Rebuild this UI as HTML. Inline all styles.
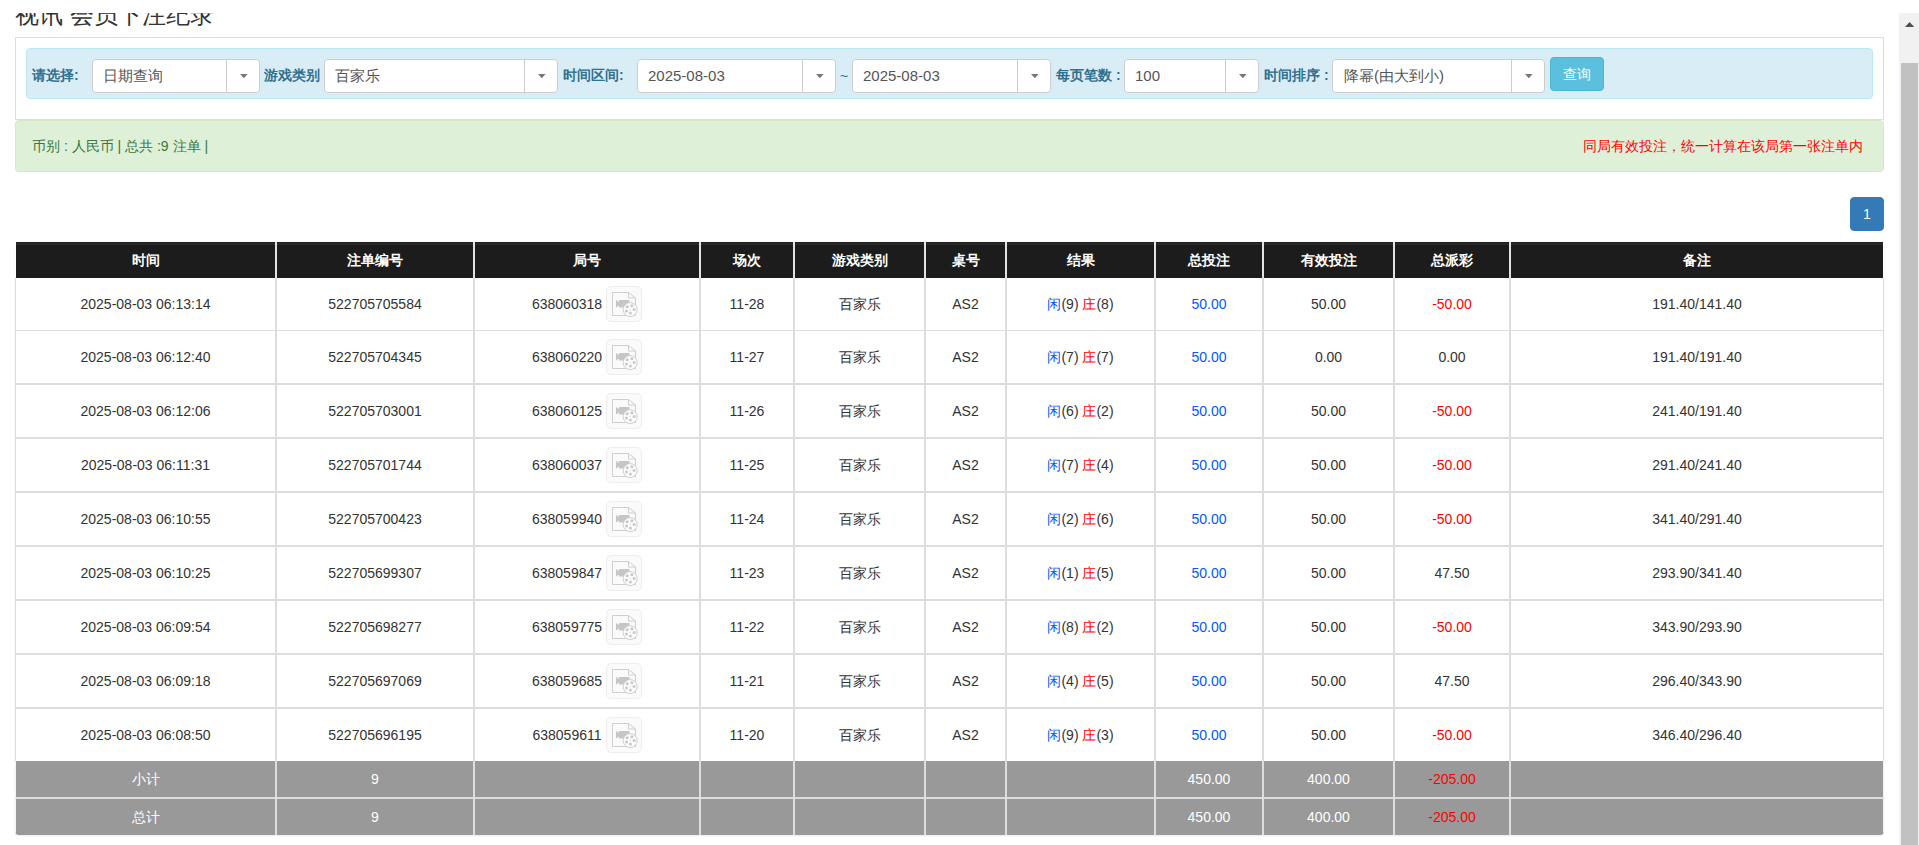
<!DOCTYPE html>
<html><head><meta charset="utf-8">
<style>
*{box-sizing:border-box;margin:0;padding:0}
html,body{width:1919px;height:845px;overflow:hidden;background:#fff;font-family:"Liberation Sans",sans-serif;color:#333;font-size:14px}
.abs{position:absolute}
.title{position:absolute;left:15px;top:0px;font-size:24px;line-height:30px;color:#333;white-space:nowrap}
.cover{position:absolute;left:0;top:0;width:1899px;height:13px;background:#fff}
.sb{position:absolute;left:1899px;top:13px;width:20px;height:832px;background:#f1f1f1}
.sbarr{position:absolute;left:6px;top:9px}
.thumb{position:absolute;left:2px;top:50px;width:17px;height:800px;background:#c1c1c1}
.panel{position:absolute;left:15px;top:37px;width:1869px;height:83px;border:1px solid #ddd;border-bottom:1px solid #ddd}
.well{position:absolute;left:26px;top:48px;width:1847px;height:51px;background:#d9edf7;border:1px solid #bce8f1;border-radius:4px}
.lbl{position:absolute;top:65px;font-size:14px;line-height:20px;font-weight:bold;color:#31708f;white-space:nowrap}
.sel{position:absolute;top:59px;height:34px;background:#fff;border:1px solid #ccc;border-radius:4px}
.selt{position:absolute;top:6px;font-size:15px;line-height:20px;color:#555;white-space:nowrap}
.dv{position:absolute;top:0;width:1px;height:32px;background:#ccc}
.arr{position:absolute;top:14px}
.tilde{position:absolute;left:840px;top:66px;font-size:14px;line-height:20px;color:#31708f}
.btn{position:absolute;left:1550px;top:57px;width:54px;height:34px;background:#5bc0de;border:1px solid #46b8da;border-radius:4px;color:#fff;font-size:14px;line-height:20px;text-align:center;padding-top:6px}
.alert{position:absolute;left:15px;top:120px;width:1869px;height:52px;background:#dff0d8;border:1px solid #d6e9c6;border-radius:4px;color:#3c763d;font-size:14px;line-height:20px}
.al{position:absolute;left:16px;top:15px;white-space:nowrap}
.ar{position:absolute;right:20px;top:15px;color:#f00;white-space:nowrap}
.pg{position:absolute;left:1850px;top:197px;width:34px;height:34px;background:#337ab7;border:1px solid #337ab7;border-radius:4px;color:#fff;font-size:14px;line-height:20px;text-align:center;padding-top:6px}
.tbl{position:absolute;left:15px;top:242px;width:1869px}
.hrow,.row,.srow{display:flex}
.c{flex:none;line-height:20px;display:flex;align-items:center;justify-content:center;white-space:nowrap;border-left:1px solid #ddd;border-right:1px solid #ddd}
.hrow .c{height:36px;background:linear-gradient(#1c1c1c 0,#1c1c1c 1px,#282828 1px,#282828 3px,#1c1c1c 3px);color:#fff;font-weight:bold;border-color:#e3e3e3}
.row .c{height:54px;background:#fff;border-top:1px solid #ddd;border-bottom:1px solid #ddd}
.row.r1 .c{height:53px;border-top:0}
.row.last .c{height:53px;border-bottom:0}
.srow .c{height:37px;background:#999;color:#fff;border-color:#ddd}
.srow.s0 .c{border-bottom:1px solid #ddd}
.srow.s1 .c{border-top:1px solid #ddd}
.hrow .c:first-child{border-left-color:#fff} .hrow .c:last-child{border-right-color:#fff}
.srow .c:first-child{border-left-color:#f4f4f4} .srow .c:last-child{border-right-color:#f4f4f4}
.tbl{border-radius:0 0 4px 4px;overflow:hidden;box-shadow:0 1px 2px rgba(0,0,0,.08)}
.blue{color:#0058ff}
.red{color:#f00}
.ico{display:inline-block;width:36px;height:36px;border:1px solid #eee;border-radius:5px;background:#fafafa;margin-left:4px;position:relative;overflow:hidden;flex:none}
.jh{display:flex;align-items:center}
.ico svg{position:absolute;left:-1px;top:-1px}
</style></head><body>
<div class="title">视讯 会员下注纪录</div>
<div class="cover"></div>
<div class="panel"></div>
<div class="well"></div>
<div class="lbl" style="left:32px">请选择:</div>
<div class="sel" style="left:92px;width:168px"><span class="selt" style="left:10px">日期查询</span><div class="dv" style="left:133px"></div><svg class="arr" style="left:147px" width="9" height="6"><path d="M0 0H7.6L3.8 4.2Z" fill="#777"/></svg></div>
<div class="lbl" style="left:264px">游戏类别</div>
<div class="sel" style="left:324px;width:234px"><span class="selt" style="left:10px">百家乐</span><div class="dv" style="left:199px"></div><svg class="arr" style="left:213px" width="9" height="6"><path d="M0 0H7.6L3.8 4.2Z" fill="#777"/></svg></div>
<div class="lbl" style="left:563px">时间区间:</div>
<div class="sel" style="left:637px;width:199px"><span class="selt" style="left:10px">2025-08-03</span><div class="dv" style="left:164px"></div><svg class="arr" style="left:178px" width="9" height="6"><path d="M0 0H7.6L3.8 4.2Z" fill="#777"/></svg></div>
<div class="tilde">~</div>
<div class="sel" style="left:852px;width:199px"><span class="selt" style="left:10px">2025-08-03</span><div class="dv" style="left:164px"></div><svg class="arr" style="left:178px" width="9" height="6"><path d="M0 0H7.6L3.8 4.2Z" fill="#777"/></svg></div>
<div class="lbl" style="left:1056px">每页笔数 :</div>
<div class="sel" style="left:1124px;width:135px"><span class="selt" style="left:10px">100</span><div class="dv" style="left:100px"></div><svg class="arr" style="left:114px" width="9" height="6"><path d="M0 0H7.6L3.8 4.2Z" fill="#777"/></svg></div>
<div class="lbl" style="left:1264px">时间排序 :</div>
<div class="sel" style="left:1332px;width:213px"><span class="selt" style="left:11px">降幂(由大到小)</span><div class="dv" style="left:178px"></div><svg class="arr" style="left:192px" width="9" height="6"><path d="M0 0H7.6L3.8 4.2Z" fill="#777"/></svg></div>
<div class="btn">查询</div>
<div class="alert"><span class="al">币别 : 人民币 | 总共 :9 注单 |</span><span class="ar">同局有效投注，统一计算在该局第一张注单内</span></div>
<div class="pg">1</div>
<div class="tbl">
<div class="hrow"><div class="c" style="width:261px"><span>时间</span></div><div class="c" style="width:198px"><span>注单编号</span></div><div class="c" style="width:226px"><span>局号</span></div><div class="c" style="width:94px"><span>场次</span></div><div class="c" style="width:131px"><span>游戏类别</span></div><div class="c" style="width:81px"><span>桌号</span></div><div class="c" style="width:149px"><span>结果</span></div><div class="c" style="width:108px"><span>总投注</span></div><div class="c" style="width:131px"><span>有效投注</span></div><div class="c" style="width:116px"><span>总派彩</span></div><div class="c" style="width:374px"><span>备注</span></div></div>
<div class="row r1"><div class="c" style="width:261px"><span>2025-08-03 06:13:14</span></div><div class="c" style="width:198px"><span>522705705584</span></div><div class="c" style="width:226px"><span><span class="jh">638060318<span class="ico"><svg width="36" height="36" viewBox="0 0 36 36"><path d="M6.5 6.5H22.5L29.5 12V29.5H6.5Z" fill="#fafafa" stroke="#cfcfcf" stroke-width="1"/><path d="M22.5 6.5V12H29.5" fill="none" stroke="#cfcfcf" stroke-width="1"/><rect x="13" y="14" width="10.5" height="7.5" fill="#c6c6c6"/><path d="M10 14L13.5 16.3V19.2L10 21.5Z" fill="#c6c6c6"/><circle cx="24.2" cy="23.6" r="7" fill="#fbfbfb" stroke="#cfcfcf" stroke-width="1"/><circle cx="21.2" cy="20.7" r="1.5" fill="#c9c9c9"/><circle cx="25.9" cy="19.7" r="1.5" fill="#c9c9c9"/><circle cx="28.1" cy="23.6" r="1.5" fill="#c9c9c9"/><circle cx="24.4" cy="27.1" r="1.5" fill="#c9c9c9"/><circle cx="20.5" cy="25.1" r="1.5" fill="#c9c9c9"/><circle cx="24.1" cy="23.5" r="0.6" fill="#d0d0d0"/></svg></span></span></span></div><div class="c" style="width:94px"><span>11-28</span></div><div class="c" style="width:131px"><span>百家乐</span></div><div class="c" style="width:81px"><span>AS2</span></div><div class="c" style="width:149px"><span><span class="blue">闲</span>(9) <span class="red">庄</span>(8)</span></div><div class="c" style="width:108px"><span><span class="blue">50.00</span></span></div><div class="c" style="width:131px"><span>50.00</span></div><div class="c" style="width:116px"><span><span class="red">-50.00</span></span></div><div class="c" style="width:374px"><span>191.40/141.40</span></div></div><div class="row r1"><div class="c" style="width:261px"><span>2025-08-03 06:12:40</span></div><div class="c" style="width:198px"><span>522705704345</span></div><div class="c" style="width:226px"><span><span class="jh">638060220<span class="ico"><svg width="36" height="36" viewBox="0 0 36 36"><path d="M6.5 6.5H22.5L29.5 12V29.5H6.5Z" fill="#fafafa" stroke="#cfcfcf" stroke-width="1"/><path d="M22.5 6.5V12H29.5" fill="none" stroke="#cfcfcf" stroke-width="1"/><rect x="13" y="14" width="10.5" height="7.5" fill="#c6c6c6"/><path d="M10 14L13.5 16.3V19.2L10 21.5Z" fill="#c6c6c6"/><circle cx="24.2" cy="23.6" r="7" fill="#fbfbfb" stroke="#cfcfcf" stroke-width="1"/><circle cx="21.2" cy="20.7" r="1.5" fill="#c9c9c9"/><circle cx="25.9" cy="19.7" r="1.5" fill="#c9c9c9"/><circle cx="28.1" cy="23.6" r="1.5" fill="#c9c9c9"/><circle cx="24.4" cy="27.1" r="1.5" fill="#c9c9c9"/><circle cx="20.5" cy="25.1" r="1.5" fill="#c9c9c9"/><circle cx="24.1" cy="23.5" r="0.6" fill="#d0d0d0"/></svg></span></span></span></div><div class="c" style="width:94px"><span>11-27</span></div><div class="c" style="width:131px"><span>百家乐</span></div><div class="c" style="width:81px"><span>AS2</span></div><div class="c" style="width:149px"><span><span class="blue">闲</span>(7) <span class="red">庄</span>(7)</span></div><div class="c" style="width:108px"><span><span class="blue">50.00</span></span></div><div class="c" style="width:131px"><span>0.00</span></div><div class="c" style="width:116px"><span>0.00</span></div><div class="c" style="width:374px"><span>191.40/191.40</span></div></div><div class="row"><div class="c" style="width:261px"><span>2025-08-03 06:12:06</span></div><div class="c" style="width:198px"><span>522705703001</span></div><div class="c" style="width:226px"><span><span class="jh">638060125<span class="ico"><svg width="36" height="36" viewBox="0 0 36 36"><path d="M6.5 6.5H22.5L29.5 12V29.5H6.5Z" fill="#fafafa" stroke="#cfcfcf" stroke-width="1"/><path d="M22.5 6.5V12H29.5" fill="none" stroke="#cfcfcf" stroke-width="1"/><rect x="13" y="14" width="10.5" height="7.5" fill="#c6c6c6"/><path d="M10 14L13.5 16.3V19.2L10 21.5Z" fill="#c6c6c6"/><circle cx="24.2" cy="23.6" r="7" fill="#fbfbfb" stroke="#cfcfcf" stroke-width="1"/><circle cx="21.2" cy="20.7" r="1.5" fill="#c9c9c9"/><circle cx="25.9" cy="19.7" r="1.5" fill="#c9c9c9"/><circle cx="28.1" cy="23.6" r="1.5" fill="#c9c9c9"/><circle cx="24.4" cy="27.1" r="1.5" fill="#c9c9c9"/><circle cx="20.5" cy="25.1" r="1.5" fill="#c9c9c9"/><circle cx="24.1" cy="23.5" r="0.6" fill="#d0d0d0"/></svg></span></span></span></div><div class="c" style="width:94px"><span>11-26</span></div><div class="c" style="width:131px"><span>百家乐</span></div><div class="c" style="width:81px"><span>AS2</span></div><div class="c" style="width:149px"><span><span class="blue">闲</span>(6) <span class="red">庄</span>(2)</span></div><div class="c" style="width:108px"><span><span class="blue">50.00</span></span></div><div class="c" style="width:131px"><span>50.00</span></div><div class="c" style="width:116px"><span><span class="red">-50.00</span></span></div><div class="c" style="width:374px"><span>241.40/191.40</span></div></div><div class="row"><div class="c" style="width:261px"><span>2025-08-03 06:11:31</span></div><div class="c" style="width:198px"><span>522705701744</span></div><div class="c" style="width:226px"><span><span class="jh">638060037<span class="ico"><svg width="36" height="36" viewBox="0 0 36 36"><path d="M6.5 6.5H22.5L29.5 12V29.5H6.5Z" fill="#fafafa" stroke="#cfcfcf" stroke-width="1"/><path d="M22.5 6.5V12H29.5" fill="none" stroke="#cfcfcf" stroke-width="1"/><rect x="13" y="14" width="10.5" height="7.5" fill="#c6c6c6"/><path d="M10 14L13.5 16.3V19.2L10 21.5Z" fill="#c6c6c6"/><circle cx="24.2" cy="23.6" r="7" fill="#fbfbfb" stroke="#cfcfcf" stroke-width="1"/><circle cx="21.2" cy="20.7" r="1.5" fill="#c9c9c9"/><circle cx="25.9" cy="19.7" r="1.5" fill="#c9c9c9"/><circle cx="28.1" cy="23.6" r="1.5" fill="#c9c9c9"/><circle cx="24.4" cy="27.1" r="1.5" fill="#c9c9c9"/><circle cx="20.5" cy="25.1" r="1.5" fill="#c9c9c9"/><circle cx="24.1" cy="23.5" r="0.6" fill="#d0d0d0"/></svg></span></span></span></div><div class="c" style="width:94px"><span>11-25</span></div><div class="c" style="width:131px"><span>百家乐</span></div><div class="c" style="width:81px"><span>AS2</span></div><div class="c" style="width:149px"><span><span class="blue">闲</span>(7) <span class="red">庄</span>(4)</span></div><div class="c" style="width:108px"><span><span class="blue">50.00</span></span></div><div class="c" style="width:131px"><span>50.00</span></div><div class="c" style="width:116px"><span><span class="red">-50.00</span></span></div><div class="c" style="width:374px"><span>291.40/241.40</span></div></div><div class="row"><div class="c" style="width:261px"><span>2025-08-03 06:10:55</span></div><div class="c" style="width:198px"><span>522705700423</span></div><div class="c" style="width:226px"><span><span class="jh">638059940<span class="ico"><svg width="36" height="36" viewBox="0 0 36 36"><path d="M6.5 6.5H22.5L29.5 12V29.5H6.5Z" fill="#fafafa" stroke="#cfcfcf" stroke-width="1"/><path d="M22.5 6.5V12H29.5" fill="none" stroke="#cfcfcf" stroke-width="1"/><rect x="13" y="14" width="10.5" height="7.5" fill="#c6c6c6"/><path d="M10 14L13.5 16.3V19.2L10 21.5Z" fill="#c6c6c6"/><circle cx="24.2" cy="23.6" r="7" fill="#fbfbfb" stroke="#cfcfcf" stroke-width="1"/><circle cx="21.2" cy="20.7" r="1.5" fill="#c9c9c9"/><circle cx="25.9" cy="19.7" r="1.5" fill="#c9c9c9"/><circle cx="28.1" cy="23.6" r="1.5" fill="#c9c9c9"/><circle cx="24.4" cy="27.1" r="1.5" fill="#c9c9c9"/><circle cx="20.5" cy="25.1" r="1.5" fill="#c9c9c9"/><circle cx="24.1" cy="23.5" r="0.6" fill="#d0d0d0"/></svg></span></span></span></div><div class="c" style="width:94px"><span>11-24</span></div><div class="c" style="width:131px"><span>百家乐</span></div><div class="c" style="width:81px"><span>AS2</span></div><div class="c" style="width:149px"><span><span class="blue">闲</span>(2) <span class="red">庄</span>(6)</span></div><div class="c" style="width:108px"><span><span class="blue">50.00</span></span></div><div class="c" style="width:131px"><span>50.00</span></div><div class="c" style="width:116px"><span><span class="red">-50.00</span></span></div><div class="c" style="width:374px"><span>341.40/291.40</span></div></div><div class="row"><div class="c" style="width:261px"><span>2025-08-03 06:10:25</span></div><div class="c" style="width:198px"><span>522705699307</span></div><div class="c" style="width:226px"><span><span class="jh">638059847<span class="ico"><svg width="36" height="36" viewBox="0 0 36 36"><path d="M6.5 6.5H22.5L29.5 12V29.5H6.5Z" fill="#fafafa" stroke="#cfcfcf" stroke-width="1"/><path d="M22.5 6.5V12H29.5" fill="none" stroke="#cfcfcf" stroke-width="1"/><rect x="13" y="14" width="10.5" height="7.5" fill="#c6c6c6"/><path d="M10 14L13.5 16.3V19.2L10 21.5Z" fill="#c6c6c6"/><circle cx="24.2" cy="23.6" r="7" fill="#fbfbfb" stroke="#cfcfcf" stroke-width="1"/><circle cx="21.2" cy="20.7" r="1.5" fill="#c9c9c9"/><circle cx="25.9" cy="19.7" r="1.5" fill="#c9c9c9"/><circle cx="28.1" cy="23.6" r="1.5" fill="#c9c9c9"/><circle cx="24.4" cy="27.1" r="1.5" fill="#c9c9c9"/><circle cx="20.5" cy="25.1" r="1.5" fill="#c9c9c9"/><circle cx="24.1" cy="23.5" r="0.6" fill="#d0d0d0"/></svg></span></span></span></div><div class="c" style="width:94px"><span>11-23</span></div><div class="c" style="width:131px"><span>百家乐</span></div><div class="c" style="width:81px"><span>AS2</span></div><div class="c" style="width:149px"><span><span class="blue">闲</span>(1) <span class="red">庄</span>(5)</span></div><div class="c" style="width:108px"><span><span class="blue">50.00</span></span></div><div class="c" style="width:131px"><span>50.00</span></div><div class="c" style="width:116px"><span>47.50</span></div><div class="c" style="width:374px"><span>293.90/341.40</span></div></div><div class="row"><div class="c" style="width:261px"><span>2025-08-03 06:09:54</span></div><div class="c" style="width:198px"><span>522705698277</span></div><div class="c" style="width:226px"><span><span class="jh">638059775<span class="ico"><svg width="36" height="36" viewBox="0 0 36 36"><path d="M6.5 6.5H22.5L29.5 12V29.5H6.5Z" fill="#fafafa" stroke="#cfcfcf" stroke-width="1"/><path d="M22.5 6.5V12H29.5" fill="none" stroke="#cfcfcf" stroke-width="1"/><rect x="13" y="14" width="10.5" height="7.5" fill="#c6c6c6"/><path d="M10 14L13.5 16.3V19.2L10 21.5Z" fill="#c6c6c6"/><circle cx="24.2" cy="23.6" r="7" fill="#fbfbfb" stroke="#cfcfcf" stroke-width="1"/><circle cx="21.2" cy="20.7" r="1.5" fill="#c9c9c9"/><circle cx="25.9" cy="19.7" r="1.5" fill="#c9c9c9"/><circle cx="28.1" cy="23.6" r="1.5" fill="#c9c9c9"/><circle cx="24.4" cy="27.1" r="1.5" fill="#c9c9c9"/><circle cx="20.5" cy="25.1" r="1.5" fill="#c9c9c9"/><circle cx="24.1" cy="23.5" r="0.6" fill="#d0d0d0"/></svg></span></span></span></div><div class="c" style="width:94px"><span>11-22</span></div><div class="c" style="width:131px"><span>百家乐</span></div><div class="c" style="width:81px"><span>AS2</span></div><div class="c" style="width:149px"><span><span class="blue">闲</span>(8) <span class="red">庄</span>(2)</span></div><div class="c" style="width:108px"><span><span class="blue">50.00</span></span></div><div class="c" style="width:131px"><span>50.00</span></div><div class="c" style="width:116px"><span><span class="red">-50.00</span></span></div><div class="c" style="width:374px"><span>343.90/293.90</span></div></div><div class="row"><div class="c" style="width:261px"><span>2025-08-03 06:09:18</span></div><div class="c" style="width:198px"><span>522705697069</span></div><div class="c" style="width:226px"><span><span class="jh">638059685<span class="ico"><svg width="36" height="36" viewBox="0 0 36 36"><path d="M6.5 6.5H22.5L29.5 12V29.5H6.5Z" fill="#fafafa" stroke="#cfcfcf" stroke-width="1"/><path d="M22.5 6.5V12H29.5" fill="none" stroke="#cfcfcf" stroke-width="1"/><rect x="13" y="14" width="10.5" height="7.5" fill="#c6c6c6"/><path d="M10 14L13.5 16.3V19.2L10 21.5Z" fill="#c6c6c6"/><circle cx="24.2" cy="23.6" r="7" fill="#fbfbfb" stroke="#cfcfcf" stroke-width="1"/><circle cx="21.2" cy="20.7" r="1.5" fill="#c9c9c9"/><circle cx="25.9" cy="19.7" r="1.5" fill="#c9c9c9"/><circle cx="28.1" cy="23.6" r="1.5" fill="#c9c9c9"/><circle cx="24.4" cy="27.1" r="1.5" fill="#c9c9c9"/><circle cx="20.5" cy="25.1" r="1.5" fill="#c9c9c9"/><circle cx="24.1" cy="23.5" r="0.6" fill="#d0d0d0"/></svg></span></span></span></div><div class="c" style="width:94px"><span>11-21</span></div><div class="c" style="width:131px"><span>百家乐</span></div><div class="c" style="width:81px"><span>AS2</span></div><div class="c" style="width:149px"><span><span class="blue">闲</span>(4) <span class="red">庄</span>(5)</span></div><div class="c" style="width:108px"><span><span class="blue">50.00</span></span></div><div class="c" style="width:131px"><span>50.00</span></div><div class="c" style="width:116px"><span>47.50</span></div><div class="c" style="width:374px"><span>296.40/343.90</span></div></div><div class="row last"><div class="c" style="width:261px"><span>2025-08-03 06:08:50</span></div><div class="c" style="width:198px"><span>522705696195</span></div><div class="c" style="width:226px"><span><span class="jh">638059611<span class="ico"><svg width="36" height="36" viewBox="0 0 36 36"><path d="M6.5 6.5H22.5L29.5 12V29.5H6.5Z" fill="#fafafa" stroke="#cfcfcf" stroke-width="1"/><path d="M22.5 6.5V12H29.5" fill="none" stroke="#cfcfcf" stroke-width="1"/><rect x="13" y="14" width="10.5" height="7.5" fill="#c6c6c6"/><path d="M10 14L13.5 16.3V19.2L10 21.5Z" fill="#c6c6c6"/><circle cx="24.2" cy="23.6" r="7" fill="#fbfbfb" stroke="#cfcfcf" stroke-width="1"/><circle cx="21.2" cy="20.7" r="1.5" fill="#c9c9c9"/><circle cx="25.9" cy="19.7" r="1.5" fill="#c9c9c9"/><circle cx="28.1" cy="23.6" r="1.5" fill="#c9c9c9"/><circle cx="24.4" cy="27.1" r="1.5" fill="#c9c9c9"/><circle cx="20.5" cy="25.1" r="1.5" fill="#c9c9c9"/><circle cx="24.1" cy="23.5" r="0.6" fill="#d0d0d0"/></svg></span></span></span></div><div class="c" style="width:94px"><span>11-20</span></div><div class="c" style="width:131px"><span>百家乐</span></div><div class="c" style="width:81px"><span>AS2</span></div><div class="c" style="width:149px"><span><span class="blue">闲</span>(9) <span class="red">庄</span>(3)</span></div><div class="c" style="width:108px"><span><span class="blue">50.00</span></span></div><div class="c" style="width:131px"><span>50.00</span></div><div class="c" style="width:116px"><span><span class="red">-50.00</span></span></div><div class="c" style="width:374px"><span>346.40/296.40</span></div></div>
<div class="srow s0"><div class="c" style="width:261px"><span>小计</span></div><div class="c" style="width:198px"><span>9</span></div><div class="c" style="width:226px"><span></span></div><div class="c" style="width:94px"><span></span></div><div class="c" style="width:131px"><span></span></div><div class="c" style="width:81px"><span></span></div><div class="c" style="width:149px"><span></span></div><div class="c" style="width:108px"><span>450.00</span></div><div class="c" style="width:131px"><span>400.00</span></div><div class="c" style="width:116px"><span><span class="red">-205.00</span></span></div><div class="c" style="width:374px"><span></span></div></div><div class="srow s1"><div class="c" style="width:261px"><span>总计</span></div><div class="c" style="width:198px"><span>9</span></div><div class="c" style="width:226px"><span></span></div><div class="c" style="width:94px"><span></span></div><div class="c" style="width:131px"><span></span></div><div class="c" style="width:81px"><span></span></div><div class="c" style="width:149px"><span></span></div><div class="c" style="width:108px"><span>450.00</span></div><div class="c" style="width:131px"><span>400.00</span></div><div class="c" style="width:116px"><span><span class="red">-205.00</span></span></div><div class="c" style="width:374px"><span></span></div></div>
</div>
<div class="sb"><svg class="sbarr" width="12" height="8"><path d="M0 5H9.2L4.6 0Z" fill="#505050"/></svg><div class="thumb"></div></div>
</body></html>
